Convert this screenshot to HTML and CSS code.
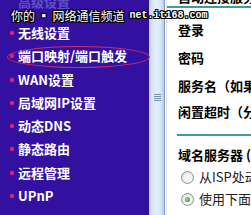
FILE: index.html
```html
<!DOCTYPE html>
<html lang="zh-CN">
<head>
<meta charset="utf-8">
<title>网络参数</title>
<link rel="stylesheet" href="styles.css">
</head>
<body>
<div class="frame">
  <nav class="sidebar">
    <div class="item faded"><span class="dot"></span><span class="label">高级设置</span></div>
    <div class="item"><span class="dot"></span><span class="label">无线设置</span></div>
    <div class="item marked"><span class="dot"></span><span class="label">端口映射/端口触发</span></div>
    <div class="item"><span class="dot"></span><span class="label">WAN设置</span></div>
    <div class="item"><span class="dot"></span><span class="label">局域网IP设置</span></div>
    <div class="item"><span class="dot"></span><span class="label">动态DNS</span></div>
    <div class="item"><span class="dot"></span><span class="label">静态路由</span></div>
    <div class="item"><span class="dot"></span><span class="label">远程管理</span></div>
    <div class="item"><span class="dot"></span><span class="label">UPnP</span></div>
  </nav>
  <div class="scrollbar">
    <div class="grip"><i></i><i></i><i></i><i></i></div>
  </div>
  <main class="content">
    <div class="cut"><div class="cut-text">自动连接服务器设置</div></div>
    <div class="row first">登录</div>
    <div class="row">密码</div>
    <div class="row">服务名（如果不清楚，请保持默认值）</div>
    <div class="row short">闲置超时（分钟，0表示不超时）</div>
    <div class="rule"></div>
    <div class="row head">域名服务器 (DNS)</div>
    <label class="radio-row"><span class="radio"></span><span class="rtext">从ISP处动态得到DNS服务器</span></label>
    <label class="radio-row"><span class="radio checked"></span><span class="rtext">使用下面的DNS服务器</span></label>
  </main>
  <div class="watermark"><span class="wm-cn">你的 ▪ 网络通信频道</span><span class="wm-url">net.it168.com</span></div>
</div>
</body>
</html>
```
FILE: styles.css
```css
html, body {
  margin: 0;
  padding: 0;
  background: #ffffff;
}
.frame {
  position: relative;
  display: flex;
  width: 251px;
  height: 215px;
  overflow: hidden;
  font-family: "Noto Sans CJK SC", "Liberation Sans", sans-serif;
}
.sidebar {
  width: 149px;
  flex: none;
  background: #33109f;
  padding-left: 10px;
  box-sizing: border-box;
}
.item {
  position: relative;
  display: flex;
  align-items: center;
  height: 23.3px;
  color: #ffffff;
  font-weight: bold;
  font-size: 13px;
  white-space: nowrap;
}
.item.faded {
  margin-top: -2px;
  align-items: flex-start;
  color: #5f4fc9;
}
.item.faded .label {
  margin-top: -4px;
}
.item.faded .dot {
  visibility: hidden;
}
.dot {
  width: 4px;
  height: 4px;
  border-radius: 50%;
  background: #e8206a;
  box-shadow: 0 0 1px #e8206a;
  margin-right: 4px;
  flex: none;
}
.label {
  line-height: 16px;
}
.marked::before {
  content: "";
  position: absolute;
  left: -3px;
  top: 1.5px;
  width: 141px;
  height: 20px;
  border: 1px solid #c8306e;
  border-radius: 50%;
}
.scrollbar {
  width: 16px;
  flex: none;
  background: linear-gradient(to right, #aac3e8 0, #c9dcf5 1px, #d9e7fa 4px, #e6f0fc 8px, #d4e4f8 12px, #b5cbea 15px);
  border-right: 1px solid #8499bd;
  padding-top: 94px;
  box-sizing: border-box;
}
.grip {
  display: flex;
  flex-direction: column;
  gap: 1px;
  padding-left: 5px;
}
.grip i {
  display: block;
  width: 7px;
  height: 1px;
  background: #7a8fb0;
}
.content {
  flex: 1;
  min-width: 0;
  border-left: 1px solid #e2e4e8;
  margin-left: 1px;
  padding-left: 11px;
  background: #ffffff;
  color: #000000;
  font-size: 13px;
  font-weight: bold;
  white-space: nowrap;
  overflow: hidden;
}
.cut {
  height: 16px;
  border-bottom: 2px solid #3f9c9e;
  margin-left: -11px;
  padding-left: 11px;
}
.cut-text {
  margin-top: -10px;
  line-height: 14px;
}
.row {
  height: 28px;
  line-height: 28px;
}
.row.first {
  margin-top: 8px;
}
.row.short {
  height: 24px;
  line-height: 24px;
}
.rule {
  height: 2px;
  background: #3f9c9e;
  margin-top: 10px;
  margin-left: -1px;
}
.row.head {
  margin-top: 7px;
  height: 23px;
  line-height: 23px;
}
.radio-row {
  display: flex;
  align-items: center;
  height: 22px;
  font-weight: normal;
  color: #222222;
  margin-left: 3px;
}
.radio {
  width: 11px;
  height: 11px;
  border-radius: 50%;
  border: 1px solid #8a9096;
  background: radial-gradient(circle at 60% 60%, #ffffff 0, #f0f0ec 50%, #d4d4cc 100%);
  margin-right: 5px;
  flex: none;
  display: flex;
  align-items: center;
  justify-content: center;
}
.radio.checked::after {
  content: "";
  width: 5px;
  height: 5px;
  border-radius: 50%;
  background: radial-gradient(circle at 40% 40%, #8fe08a 0, #3aa83a 70%);
}
.rtext {
  line-height: 16px;
}
.watermark {
  position: absolute;
  left: 11px;
  top: 8px;
  display: flex;
  align-items: center;
  gap: 5px;
  color: #ffffff;
  white-space: nowrap;
  text-shadow: 1px 0 0 #000, -1px 0 0 #000, 0 1px 0 #000, 0 -1px 0 #000, 1px 1px 0 #000, -1px -1px 0 #000, 1px -1px 0 #000, -1px 1px 0 #000;
}
.wm-cn {
  font-family: "Noto Sans CJK SC", sans-serif;
  font-size: 12px;
  line-height: 16px;
}
.wm-url {
  font-family: "Liberation Mono", monospace;
  font-size: 10px;
  font-weight: bold;
  line-height: 16px;
}
```
